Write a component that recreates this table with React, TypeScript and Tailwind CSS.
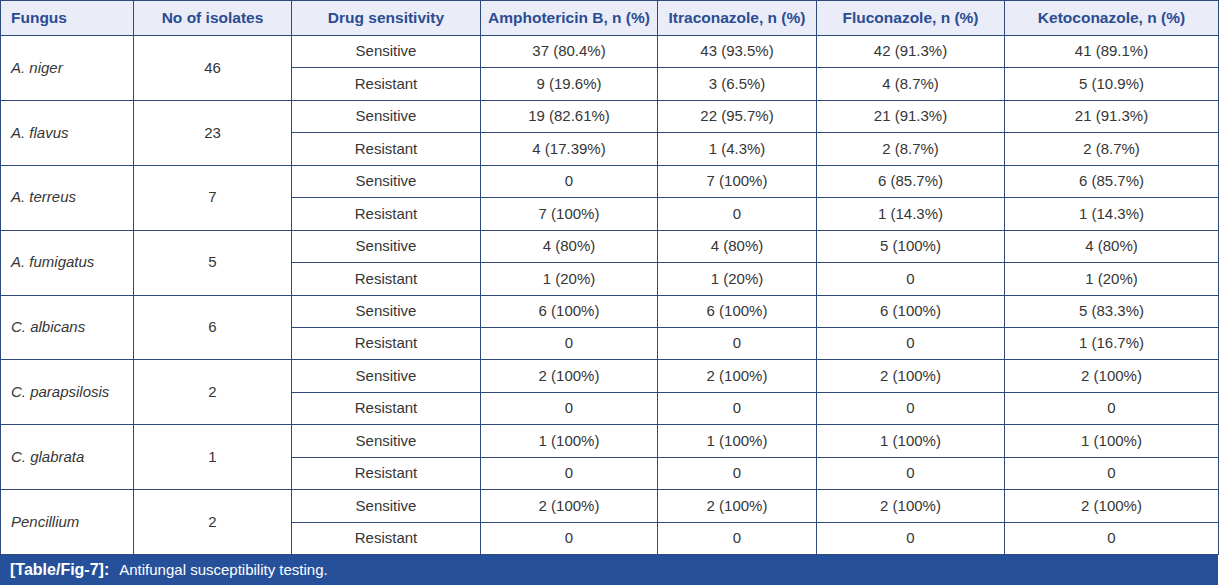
import React from 'react';

type Group = {
  fungus: string;
  isolates: number;
  sensitive: string[];
  resistant: string[];
};

const groups: Group[] = [
  { fungus: 'A. niger', isolates: 46, sensitive: ['37 (80.4%)', '43 (93.5%)', '42 (91.3%)', '41 (89.1%)'], resistant: ['9 (19.6%)', '3 (6.5%)', '4 (8.7%)', '5 (10.9%)'] },
  { fungus: 'A. flavus', isolates: 23, sensitive: ['19 (82.61%)', '22 (95.7%)', '21 (91.3%)', '21 (91.3%)'], resistant: ['4 (17.39%)', '1 (4.3%)', '2 (8.7%)', '2 (8.7%)'] },
  { fungus: 'A. terreus', isolates: 7, sensitive: ['0', '7 (100%)', '6 (85.7%)', '6 (85.7%)'], resistant: ['7 (100%)', '0', '1 (14.3%)', '1 (14.3%)'] },
  { fungus: 'A. fumigatus', isolates: 5, sensitive: ['4 (80%)', '4 (80%)', '5 (100%)', '4 (80%)'], resistant: ['1 (20%)', '1 (20%)', '0', '1 (20%)'] },
  { fungus: 'C. albicans', isolates: 6, sensitive: ['6 (100%)', '6 (100%)', '6 (100%)', '5 (83.3%)'], resistant: ['0', '0', '0', '1 (16.7%)'] },
  { fungus: 'C. parapsilosis', isolates: 2, sensitive: ['2 (100%)', '2 (100%)', '2 (100%)', '2 (100%)'], resistant: ['0', '0', '0', '0'] },
  { fungus: 'C. glabrata', isolates: 1, sensitive: ['1 (100%)', '1 (100%)', '1 (100%)', '1 (100%)'], resistant: ['0', '0', '0', '0'] },
  { fungus: 'Pencillium', isolates: 2, sensitive: ['2 (100%)', '2 (100%)', '2 (100%)', '2 (100%)'], resistant: ['0', '0', '0', '0'] },
];

const headers = [
  'Fungus',
  'No of isolates',
  'Drug sensitivity',
  'Amphotericin B, n (%)',
  'Itraconazole, n (%)',
  'Fluconazole, n (%)',
  'Ketoconazole, n (%)',
];

const cell = 'border border-[#2d4a7c] text-center align-middle';

export default function App() {
  return (
    <div className="w-[1221px] h-[585px] bg-white font-['Liberation_Sans',Arial,sans-serif] text-[15px] text-[#363636]">
      <table className="w-[1218px] table-fixed border-collapse">
        <colgroup>
          <col className="w-[133px]" />
          <col className="w-[158px]" />
          <col className="w-[189px]" />
          <col className="w-[177px]" />
          <col className="w-[159px]" />
          <col className="w-[188px]" />
          <col className="w-[214px]" />
        </colgroup>
        <thead>
          <tr className="h-[35px] bg-[#eaecf7]">
            {headers.map((h, i) => (
              <th
                key={h}
                className={`${cell} font-bold text-[15.5px] text-[#2b4c93] ${i === 0 ? 'text-left pl-[10px]' : ''}`}
              >
                {h}
              </th>
            ))}
          </tr>
        </thead>
        <tbody>
          {groups.map((g) => (
            <React.Fragment key={g.fungus}>
              <tr className="h-[32.44px]">
                <td rowSpan={2} className={`${cell} text-left pl-[10px] italic`}>
                  {g.fungus}
                </td>
                <td rowSpan={2} className={cell}>
                  {g.isolates}
                </td>
                <td className={cell}>Sensitive</td>
                {g.sensitive.map((v, i) => (
                  <td key={i} className={cell}>
                    {v}
                  </td>
                ))}
              </tr>
              <tr className="h-[32.44px]">
                <td className={cell}>Resistant</td>
                {g.resistant.map((v, i) => (
                  <td key={i} className={cell}>
                    {v}
                  </td>
                ))}
              </tr>
            </React.Fragment>
          ))}
        </tbody>
      </table>
      <div className="w-[1218px] h-[30px] bg-[#27509b] text-white flex items-center pl-[10px]">
        <span className="font-bold text-[16px] mr-[10px]">[Table/Fig-7]:</span>
        <span>Antifungal susceptibility testing.</span>
      </div>
    </div>
  );
}
